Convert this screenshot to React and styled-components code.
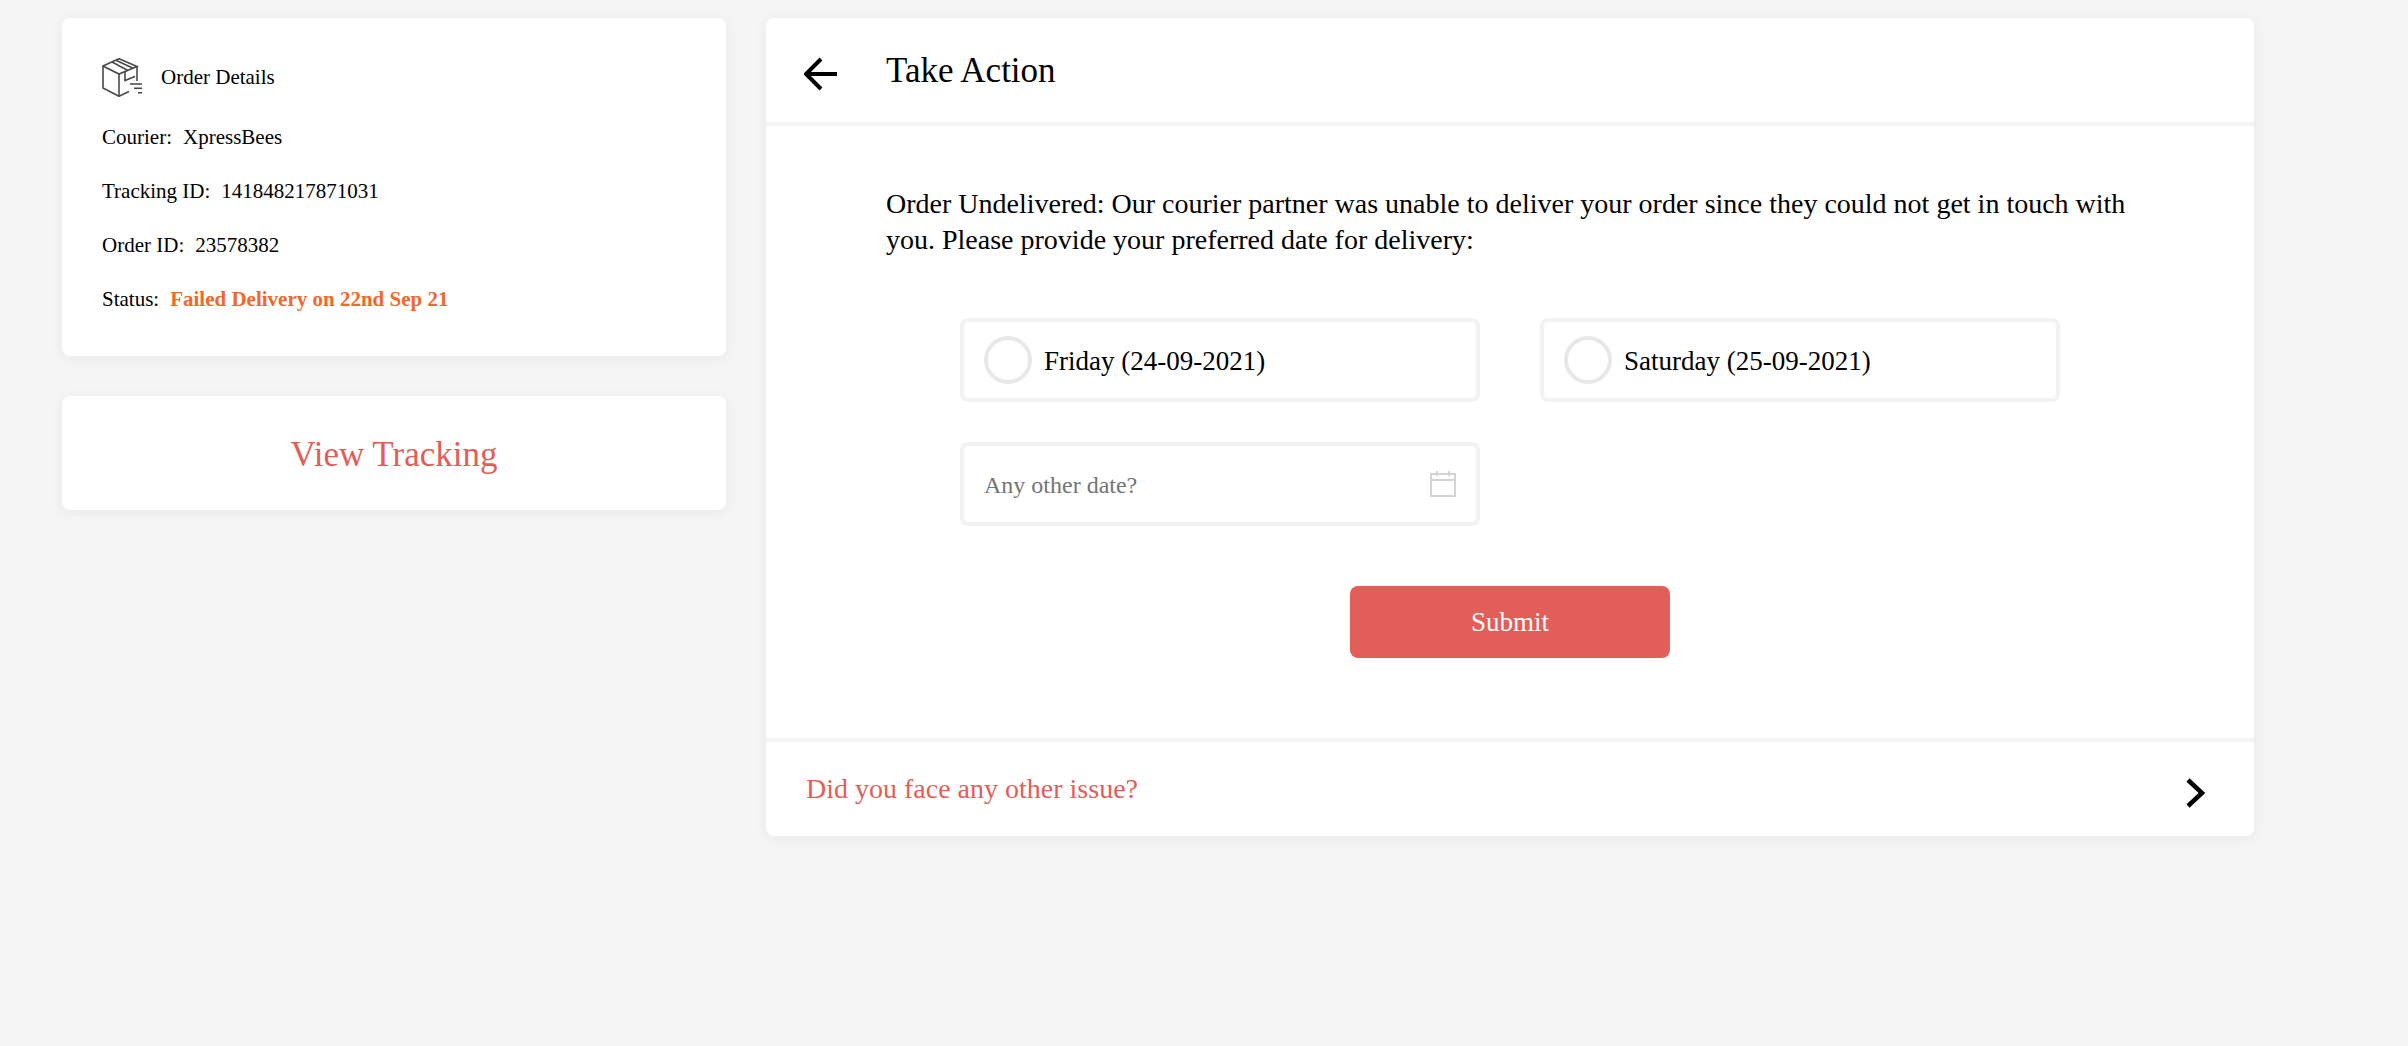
import React from 'react';
import styled, { createGlobalStyle } from 'styled-components';

const GlobalStyle = createGlobalStyle`
  html, body {
    margin: 0;
    padding: 0;
    background: #f5f5f5;
    font-family: "Liberation Serif", "Times New Roman", serif;
    color: #000;
  }
  * {
    box-sizing: border-box;
  }
`;

const Page = styled.div`
  display: flex;
  align-items: flex-start;
  gap: 40px;
  height: 1046px;
  padding: 18px 0 0 62px;
  overflow: hidden;
`;

const LeftColumn = styled.div`
  display: flex;
  flex-direction: column;
  gap: 40px;
  width: 664px;
`;

const Card = styled.div`
  background: #fff;
  border-radius: 8px;
  box-shadow: 0 2px 14px rgba(0, 0, 0, 0.06);
`;

const DetailsCard = styled(Card)`
  height: 338px;
  padding: 40px;
`;

const DetailsHeader = styled.div`
  display: flex;
  align-items: center;
  gap: 18px;
  height: 39px;
  margin-bottom: 25px;
  font-size: 21px;
`;

const DetailRow = styled.div`
  display: flex;
  gap: 11px;
  height: 54px;
  font-size: 21px;
  line-height: 30px;
`;

const StatusText = styled.span`
  color: #f2672a;
  font-weight: 700;
`;

const TrackingCard = styled(Card)`
  display: flex;
  align-items: center;
  justify-content: center;
  height: 114px;
  padding-top: 4px;
  font-size: 35px;
  color: #e25e58;
`;

const ActionPanel = styled(Card)`
  display: flex;
  flex-direction: column;
  width: 1488px;
  height: 818px;
`;

const PanelHeader = styled.div`
  display: flex;
  align-items: center;
  height: 104px;
  padding-left: 38px;
  font-size: 35px;
`;

const HeaderTitle = styled.div`
  margin: 2px 0 0 48px;
`;

const Divider = styled.div`
  flex: none;
  height: 4px;
  background: #f4f4f4;
`;

const PanelBody = styled.div`
  flex: 1;
  padding: 60px 120px 0;
`;

const Message = styled.div`
  font-size: 28px;
  line-height: 36px;
`;

const OptionGrid = styled.div`
  display: grid;
  grid-template-columns: 520px 520px;
  column-gap: 60px;
  row-gap: 40px;
  margin: 60px 0 0 74px;
`;

const OptionBox = styled.label`
  display: flex;
  align-items: center;
  height: 84px;
  padding: 0 20px;
  background: #fff;
  border: 4px solid #f2f2f2;
  border-radius: 8px;
  font-size: 27px;
`;

const OptionText = styled.span`
  margin-top: 2px;
`;

const RadioCircle = styled.span`
  flex: none;
  width: 48px;
  height: 48px;
  margin-right: 12px;
  border: 4px solid #e8e8e8;
  border-radius: 50%;
`;

const DateInput = styled.input`
  flex: 1;
  min-width: 0;
  margin-top: 2px;
  border: 0;
  outline: 0;
  padding: 0;
  background: transparent;
  font: inherit;
  font-size: 24px;

  &::placeholder {
    color: #757575;
    opacity: 1;
  }
`;

const SubmitRow = styled.div`
  display: flex;
  justify-content: center;
  margin-top: 60px;
`;

const SubmitButton = styled.button`
  width: 320px;
  height: 72px;
  border: 0;
  border-radius: 8px;
  background: #e25e58;
  color: #fff;
  font-family: inherit;
  font-size: 27px;
`;

const PanelFooter = styled.div`
  display: flex;
  align-items: center;
  justify-content: space-between;
  height: 94px;
  padding: 0 48px 0 40px;
  font-size: 28px;
  color: #e25e58;
`;

const ArrowSvg = styled.svg`
  margin-top: 7px;
`;

const ChevronSvg = styled.svg`
  margin-top: 8px;
`;

const BoxIcon = () => (
  <svg width="41" height="39" viewBox="0 0 41 39" fill="none" stroke="#4a4a4a" strokeWidth="1.6">
    <path d="M1 8 17 0.7 35 8.5 17 16 Z" />
    <path d="M1 8V30L17 38.3 27 33.5" />
    <path d="M17 16V38.3" />
    <path d="M35 8.5V23" />
    <path d="M10 4 26 12.5M14 2.3 31 10.2" />
    <path d="M23 14V22.5L33 18.5" />
    <path d="M28 26H40M32 30.3H40M36 34.7H40" stroke="#444" strokeWidth="1.6" />
  </svg>
);

const BackArrow = () => (
  <ArrowSvg width="34" height="34" viewBox="0 0 34 34" fill="none" stroke="#000" strokeWidth="4">
    <path d="M33 17H3" />
    <path d="M17 2 2 17 17 32" />
  </ArrowSvg>
);

const Chevron = () => (
  <ChevronSvg width="20" height="30" viewBox="0 0 20 30" fill="none" stroke="#000" strokeWidth="4.5">
    <path d="M2 2 16 15 2 28" />
  </ChevronSvg>
);

const CalendarIcon = () => (
  <svg width="26" height="26" viewBox="0 0 26 26" fill="none" stroke="#d4d4d4" strokeWidth="2">
    <rect x="1" y="3" width="24" height="22" />
    <path d="M1 9H25" />
    <path d="M7 0V5M19 0V5" />
  </svg>
);

const App = () => {
  return (
    <>
      <GlobalStyle />
      <Page>
        <LeftColumn>
          <DetailsCard>
            <DetailsHeader>
              <BoxIcon />
              <span>Order Details</span>
            </DetailsHeader>
            <DetailRow>
              <span>Courier:</span>
              <span>XpressBees</span>
            </DetailRow>
            <DetailRow>
              <span>Tracking ID:</span>
              <span>141848217871031</span>
            </DetailRow>
            <DetailRow>
              <span>Order ID:</span>
              <span>23578382</span>
            </DetailRow>
            <DetailRow>
              <span>Status:</span>
              <StatusText>Failed Delivery on 22nd Sep 21</StatusText>
            </DetailRow>
          </DetailsCard>
          <TrackingCard>View Tracking</TrackingCard>
        </LeftColumn>
        <ActionPanel>
          <PanelHeader>
            <BackArrow />
            <HeaderTitle>Take Action</HeaderTitle>
          </PanelHeader>
          <Divider />
          <PanelBody>
            <Message>
              Order Undelivered: Our courier partner was unable to deliver your order since they could not get in touch with you. Please provide your preferred date for delivery:
            </Message>
            <OptionGrid>
              <OptionBox>
                <RadioCircle />
                <OptionText>Friday (24-09-2021)</OptionText>
              </OptionBox>
              <OptionBox>
                <RadioCircle />
                <OptionText>Saturday (25-09-2021)</OptionText>
              </OptionBox>
              <OptionBox>
                <DateInput placeholder="Any other date?" />
                <CalendarIcon />
              </OptionBox>
            </OptionGrid>
            <SubmitRow>
              <SubmitButton>Submit</SubmitButton>
            </SubmitRow>
          </PanelBody>
          <Divider />
          <PanelFooter>
            Did you face any other issue?
            <Chevron />
          </PanelFooter>
        </ActionPanel>
      </Page>
    </>
  );
};

export default App;
